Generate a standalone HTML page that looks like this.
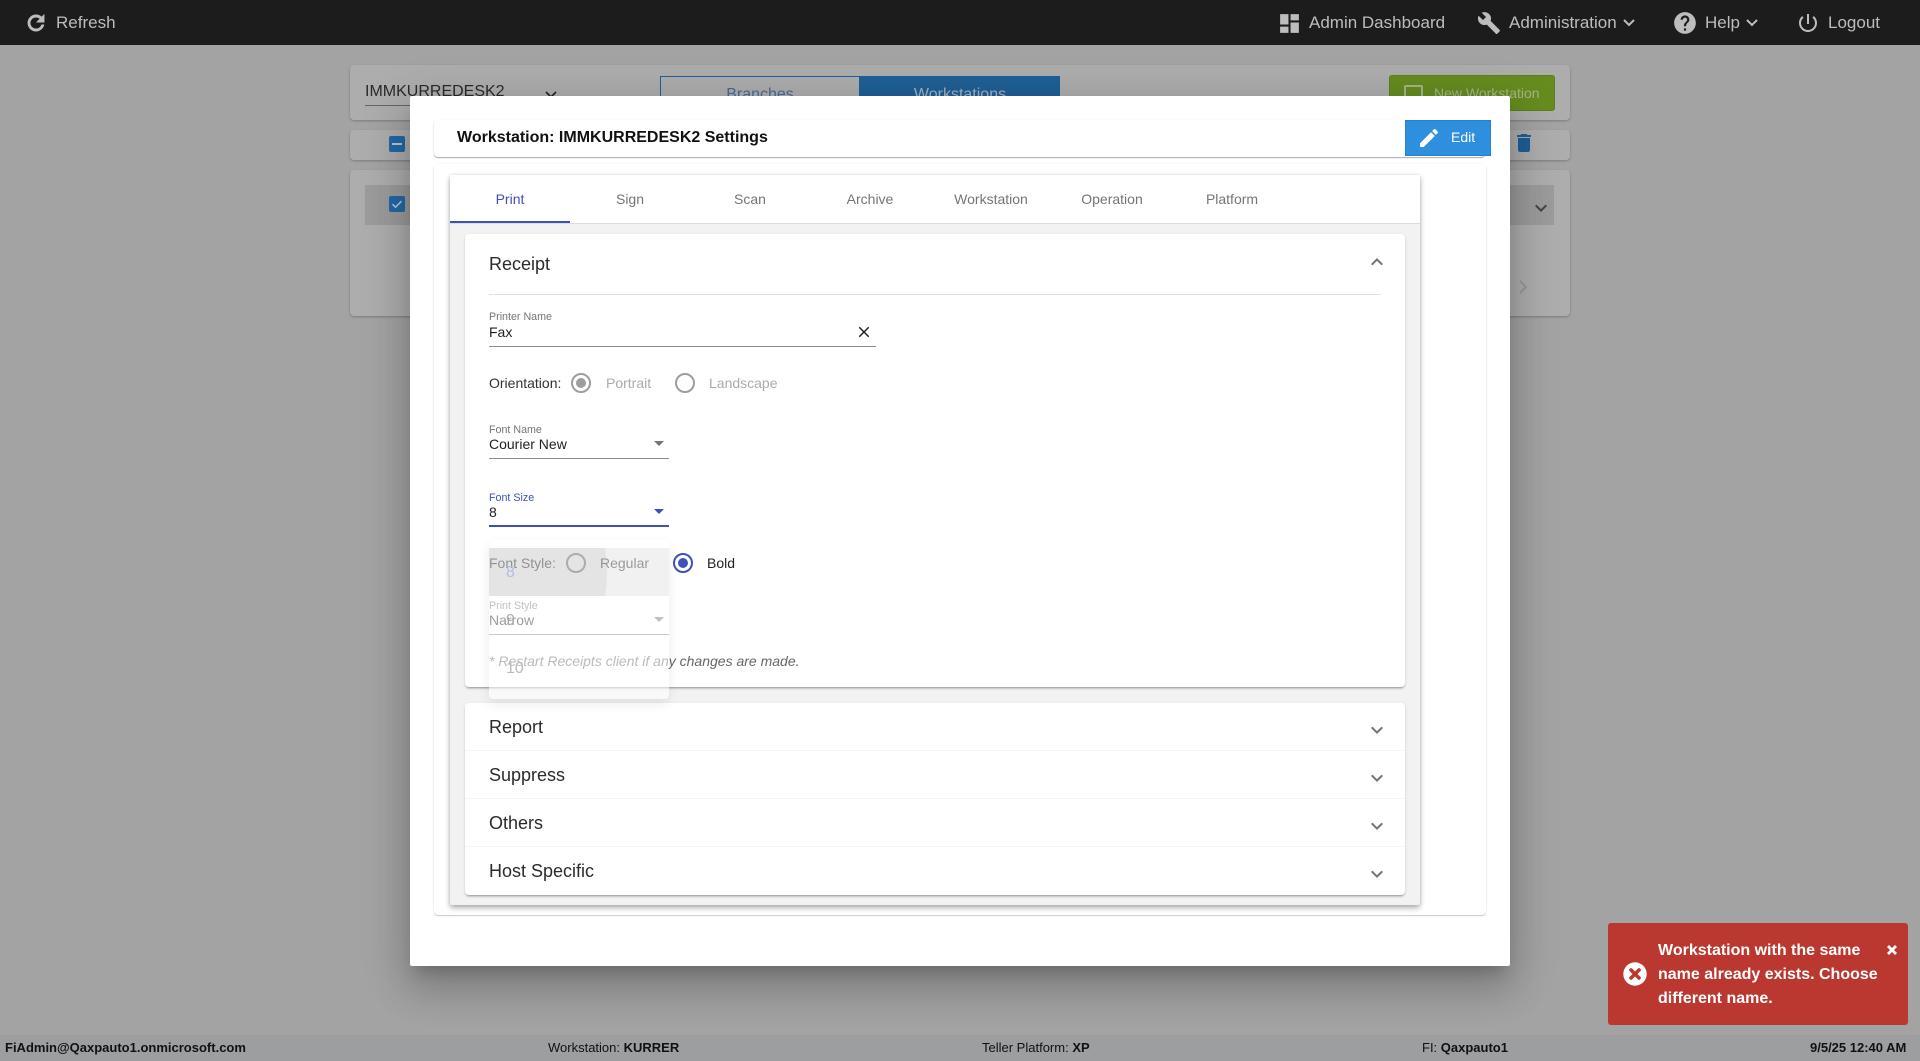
<!DOCTYPE html>
<html><head><meta charset="utf-8"><title>Workstation Settings</title>
<style>
*{box-sizing:border-box}
html,body{margin:0;padding:0;width:1920px;height:1061px;overflow:hidden;background:#a3a3a3;font-family:"Liberation Sans",Arial,sans-serif}
.a{position:absolute}
.t{position:absolute;white-space:nowrap}
svg{position:absolute;display:block}
.card{position:absolute;background:#adadad;border-radius:4px;box-shadow:0 1px 2px rgba(0,0,0,.25)}
.top{color:#bdbdbd;font-size:17px;line-height:24px;top:11px}
.lbl{font-size:10.7px;line-height:14px;color:#757575}
.val{font-size:14px;line-height:18px;color:#222}
.tab{font-size:14px;line-height:18px;top:190px;width:120px;text-align:center;color:#757575}
.row{font-size:18px;line-height:24px;left:489px;color:#2b2b2b}
.foot{font-size:13px;line-height:16px;top:1040px;color:#111}
.foot b{font-weight:700}
</style></head>
<body>
<!-- background page -->
<div class="card" style="left:350px;top:65px;width:1220px;height:55px"></div>
<div class="card" style="left:350px;top:130px;width:1220px;height:30px"></div>
<div class="card" style="left:350px;top:170px;width:1220px;height:146px"></div>
<div class="t" style="left:365px;top:82px;font-size:16px;line-height:20px;color:#2a2a2a">IMMKURREDESK2</div>
<div class="a" style="left:365px;top:105px;width:150px;height:1px;background:#666"></div>
<svg style="left:543px;top:86px" width="16" height="16" viewBox="0 0 16 16"><path d="M3 6l5 5 5-5" fill="none" stroke="#222" stroke-width="1.6"/></svg>
<div class="a" style="left:660px;top:76px;width:200px;height:40px;border:1px solid #20609a"></div>
<div class="a" style="left:860px;top:76px;width:200px;height:40px;background:#205f95"></div>
<div class="t" style="left:660px;width:200px;text-align:center;top:85px;font-size:16px;line-height:20px;color:#48699a">Branches</div>
<div class="t" style="left:860px;width:200px;text-align:center;top:85px;font-size:16px;line-height:20px;color:#a3b3c5">Workstations</div>
<div class="a" style="left:1389px;top:75px;width:166px;height:36px;background:#668c20;border-radius:3px;border:1px solid #5c7f1c"></div>
<div class="a" style="left:1404px;top:85px;width:19px;height:19px;border:2px solid #a6b58a;border-radius:2px"></div>
<div class="t" style="left:1434px;top:84px;font-size:14px;line-height:18px;color:#a6b58a">New Workstation</div>
<div class="a" style="left:389px;top:136px;width:16px;height:16px;background:#2468a4;border-radius:2px"></div>
<div class="a" style="left:392px;top:143px;width:10px;height:2px;background:#b5c5d5"></div>
<svg style="left:1512px;top:131px" width="24" height="24" viewBox="0 0 24 24"><path fill="#205f95" d="M6 19c0 1.1.9 2 2 2h8c1.1 0 2-.9 2-2V7H6v12zM19 4h-3.5l-1-1h-5l-1 1H5v2h14V4z"/></svg>
<div class="a" style="left:365px;top:185px;width:1189px;height:40px;background:#9b9b9b"></div>
<div class="a" style="left:389px;top:196px;width:16px;height:16px;background:#2468a4;border-radius:2px"></div>
<svg style="left:389px;top:196px" width="16" height="16" viewBox="0 0 16 16"><path d="M3.5 8.2l3 3 6-6" fill="none" stroke="#b5c5d5" stroke-width="1.5"/></svg>
<svg style="left:1529px;top:196px" width="24" height="24" viewBox="0 0 24 24"><path fill="#444" d="M16.59 8.59L12 13.17 7.41 8.59 6 10l6 6 6-6z"/></svg>
<svg style="left:1515px;top:279px" width="16" height="16" viewBox="0 0 16 16"><path d="M5 2l6 6-6 6" fill="none" stroke="#939393" stroke-width="1.6"/></svg>
<div class="a" style="left:0;top:1035px;width:1920px;height:26px;background:#9d9e9f"></div>
<div class="t foot" style="left:5px"><b>FiAdmin@Qaxpauto1.onmicrosoft.com</b></div>
<div class="t foot" style="left:548px">Workstation: <b>KURRER</b></div>
<div class="t foot" style="left:982px">Teller Platform: <b>XP</b></div>
<div class="t foot" style="left:1422px">FI: <b>Qaxpauto1</b></div>
<div class="t foot" style="left:1810px"><b>9/5/25 12:40 AM</b></div>
<!-- top bar -->
<div class="a" style="left:0;top:0;width:1920px;height:45px;background:#1c1c1c"></div>
<svg style="left:24px;top:11px" width="24" height="24" viewBox="0 0 24 24"><path fill="#bdbdbd" stroke="#bdbdbd" stroke-width=".9" d="M17.65 6.35C16.2 4.9 14.21 4 12 4c-4.42 0-7.99 3.58-7.99 8s3.57 8 7.99 8c3.73 0 6.84-2.55 7.73-6h-2.08c-.82 2.33-3.04 4-5.65 4-3.31 0-6-2.69-6-6s2.69-6 6-6c1.66 0 3.14.69 4.22 1.78L13 11h7V4l-2.35 2.35z"/></svg>
<div class="t top" style="left:56px">Refresh</div>
<svg style="left:1277px;top:11px" width="25" height="25" viewBox="0 0 24 24"><path fill="#bdbdbd" d="M3 13h8V3H3v10zm0 8h8v-6H3v6zm10 0h8V11h-8v10zm0-18v6h8V3h-8z"/></svg>
<div class="t top" style="left:1309px">Admin Dashboard</div>
<svg style="left:1477px;top:11px" width="24" height="24" viewBox="0 0 24 24"><path fill="#bdbdbd" d="M22.7 19l-9.1-9.1c.9-2.3.4-5-1.5-6.9-2-2-5-2.4-7.4-1.3L9 6 6 9 1.6 4.7C.4 7.1.9 10.1 2.9 12.1c1.9 1.9 4.6 2.4 6.9 1.5l9.1 9.1c.4.4 1 .4 1.4 0l2.3-2.3c.5-.4.5-1.1.1-1.4z"/></svg>
<div class="t top" style="left:1509px">Administration</div>
<svg style="left:1622px;top:17px" width="14" height="12" viewBox="0 0 14 12"><path d="M2 3l5 5 5-5" fill="none" stroke="#bdbdbd" stroke-width="2"/></svg>
<svg style="left:1672px;top:10px" width="26" height="26" viewBox="0 0 24 24"><path fill="#bdbdbd" d="M12 2C6.48 2 2 6.48 2 12s4.48 10 10 10 10-4.48 10-10S17.52 2 12 2zm1 17h-2v-2h2v2zm2.07-7.75l-.9.92C13.45 12.9 13 13.5 13 15h-2v-.5c0-1.1.45-2.1 1.17-2.83l1.24-1.26c.37-.36.59-.86.59-1.41 0-1.1-.9-2-2-2s-2 .9-2 2H8c0-2.21 1.79-4 4-4s4 1.79 4 4c0 .88-.36 1.68-.93 2.25z"/></svg>
<div class="t top" style="left:1705px">Help</div>
<svg style="left:1745px;top:17px" width="14" height="12" viewBox="0 0 14 12"><path d="M2 3l5 5 5-5" fill="none" stroke="#bdbdbd" stroke-width="2"/></svg>
<svg style="left:1796px;top:11px" width="24" height="24" viewBox="0 0 24 24"><path fill="#bdbdbd" d="M13 3h-2v10h2V3zm4.83 2.17l-1.42 1.42C17.99 7.86 19 9.81 19 12c0 3.87-3.13 7-7 7s-7-3.13-7-7c0-2.19 1.01-4.14 2.58-5.42L6.17 5.17C4.23 6.82 3 9.26 3 12c0 4.97 4.03 9 9 9s9-4.03 9-9c0-2.74-1.23-5.18-3.17-6.83z"/></svg>
<div class="t top" style="left:1828px">Logout</div>
<!-- modal -->
<div class="a" style="left:410px;top:96px;width:1100px;height:870px;background:#fff;border-radius:2px;box-shadow:0 11px 15px -7px rgba(0,0,0,.2),0 24px 38px 3px rgba(0,0,0,.14),0 9px 46px 8px rgba(0,0,0,.12)"></div>
<div class="a" style="left:434px;top:120px;width:1051px;height:37px;background:#fff;border-radius:4px;box-shadow:0 1px 1px rgba(0,0,0,.32),0 0 2px rgba(0,0,0,.05)"></div>
<div class="t" style="left:457px;top:128px;font-size:16px;line-height:20px;font-weight:700;color:#111">Workstation: IMMKURREDESK2 Settings</div>
<div class="a" style="left:1405px;top:120px;width:86px;height:36px;background:#2f8fdf;border:1px solid #2a7fc8"></div>
<svg style="left:1417px;top:126px" width="24" height="24" viewBox="0 0 24 24"><path fill="#fff" d="M3 17.25V21h3.75L17.81 9.94l-3.75-3.75L3 17.25zM20.71 7.04c.39-.39.39-1.02 0-1.41l-2.34-2.34c-.39-.39-1.02-.39-1.41 0l-1.83 1.83 3.75 3.75 1.83-1.83z"/></svg>
<div class="t" style="left:1451px;top:128px;font-size:14px;line-height:18px;color:#fff">Edit</div>
<div class="a" style="left:434px;top:164px;width:1052px;height:751px;background:#fff;border-radius:4px;box-shadow:0 1px 1px rgba(0,0,0,.2),0 0 2px rgba(0,0,0,.06)"></div>
<div class="a" style="left:450px;top:175px;width:970px;height:730px;background:#f2f2f2;border-radius:2px;box-shadow:0 3px 6px rgba(0,0,0,.3),0 0 3px rgba(0,0,0,.12)"></div>
<div class="a" style="left:450px;top:175px;width:970px;height:49px;background:#fff;border-bottom:1px solid #ddd"></div>
<div class="a" style="left:450px;top:221px;width:120px;height:2px;background:#3f51b5"></div>
<div class="t tab" style="left:450px;color:#3f51b5">Print</div>
<div class="t tab" style="left:570px">Sign</div>
<div class="t tab" style="left:690px">Scan</div>
<div class="t tab" style="left:810px">Archive</div>
<div class="t tab" style="left:931px">Workstation</div>
<div class="t tab" style="left:1052px">Operation</div>
<div class="t tab" style="left:1172px">Platform</div>
<!-- receipt panel -->
<div class="a" style="left:465px;top:234px;width:940px;height:453px;background:#fff;border-radius:4px;box-shadow:0 2px 2px -1px rgba(0,0,0,.35),0 1px 3px rgba(0,0,0,.1)"></div>
<div class="t row" style="top:252px">Receipt</div>
<svg style="left:1365px;top:250px" width="24" height="24" viewBox="0 0 24 24"><path fill="#757575" d="M12 8l-6 6 1.41 1.41L12 10.83l4.59 4.58L18 14z"/></svg>
<div class="a" style="left:489px;top:294px;width:892px;height:1px;background:#e0e0e0"></div>
<div class="t lbl" style="left:489px;top:310px">Printer Name</div>
<div class="t val" style="left:489px;top:323px">Fax</div>
<svg style="left:855px;top:323px" width="18" height="18" viewBox="0 0 24 24"><path fill="#222" d="M19 6.41L17.59 5 12 10.59 6.41 5 5 6.41 10.59 12 5 17.59 6.41 19 12 13.41 17.59 19 19 17.59 13.41 12z"/></svg>
<div class="a" style="left:489px;top:346px;width:387px;height:1px;background:#8a8a8a"></div>
<div class="t val" style="left:489px;top:374px;color:#333">Orientation:</div>
<div class="a" style="left:571px;top:373px;width:20px;height:20px;border:2px solid #9e9e9e;border-radius:50%"></div>
<div class="a" style="left:576px;top:378px;width:10px;height:10px;background:#9e9e9e;border-radius:50%"></div>
<div class="t val" style="left:606px;top:374px;color:#aaa">Portrait</div>
<div class="a" style="left:675px;top:373px;width:20px;height:20px;border:2px solid #9e9e9e;border-radius:50%"></div>
<div class="t val" style="left:709px;top:374px;color:#aaa">Landscape</div>
<div class="t lbl" style="left:489px;top:422.5px">Font Name</div>
<div class="t val" style="left:489px;top:435px">Courier New</div>
<div class="a" style="left:654px;top:441px;width:0;height:0;border-left:5px solid transparent;border-right:5px solid transparent;border-top:5px solid #757575"></div>
<div class="a" style="left:489px;top:458px;width:180px;height:1px;background:#8a8a8a"></div>
<div class="t lbl" style="left:489px;top:490.5px;color:#3f51b5">Font Size</div>
<div class="t val" style="left:489px;top:503px">8</div>
<div class="a" style="left:654px;top:509px;width:0;height:0;border-left:5px solid transparent;border-right:5px solid transparent;border-top:5px solid #3f51b5"></div>
<div class="a" style="left:489px;top:525px;width:180px;height:2px;background:#3f51b5"></div>
<div class="t val" style="left:489px;top:554px;color:#333">Font Style:</div>
<div class="a" style="left:566px;top:553px;width:20px;height:20px;border:2px solid #757575;border-radius:50%"></div>
<div class="t val" style="left:600px;top:554px;color:#333">Regular</div>
<div class="a" style="left:673px;top:553px;width:20px;height:20px;border:2px solid #3f51b5;border-radius:50%"></div>
<div class="a" style="left:678px;top:558px;width:10px;height:10px;background:#3f51b5;border-radius:50%"></div>
<div class="t val" style="left:707px;top:554px;color:#222">Bold</div>
<div class="t lbl" style="left:489px;top:598.5px">Print Style</div>
<div class="t val" style="left:489px;top:611px">Narrow</div>
<div class="a" style="left:654px;top:617px;width:0;height:0;border-left:5px solid transparent;border-right:5px solid transparent;border-top:5px solid #757575"></div>
<div class="a" style="left:489px;top:634px;width:180px;height:1px;background:#8a8a8a"></div>
<div class="t" style="left:489px;top:652px;font-size:14px;line-height:18px;font-style:italic;color:#666">* Restart Receipts client if any changes are made.</div>
<!-- other panels -->
<div class="a" style="left:465px;top:703px;width:940px;height:192px;background:#fff;border-radius:4px;box-shadow:0 2px 2px -1px rgba(0,0,0,.35),0 1px 3px rgba(0,0,0,.1)"></div>
<div class="a" style="left:465px;top:750px;width:940px;height:1px;background:#f5f5f5"></div>
<div class="a" style="left:465px;top:798px;width:940px;height:1px;background:#f5f5f5"></div>
<div class="a" style="left:465px;top:846px;width:940px;height:1px;background:#f5f5f5"></div>
<div class="t row" style="top:715px">Report</div>
<div class="t row" style="top:763px">Suppress</div>
<div class="t row" style="top:811px">Others</div>
<div class="t row" style="top:859px">Host Specific</div>
<svg style="left:1365px;top:718px" width="24" height="24" viewBox="0 0 24 24"><path fill="#757575" d="M16.59 8.59L12 13.17 7.41 8.59 6 10l6 6 6-6z"/></svg>
<svg style="left:1365px;top:766px" width="24" height="24" viewBox="0 0 24 24"><path fill="#757575" d="M16.59 8.59L12 13.17 7.41 8.59 6 10l6 6 6-6z"/></svg>
<svg style="left:1365px;top:814px" width="24" height="24" viewBox="0 0 24 24"><path fill="#757575" d="M16.59 8.59L12 13.17 7.41 8.59 6 10l6 6 6-6z"/></svg>
<svg style="left:1365px;top:862px" width="24" height="24" viewBox="0 0 24 24"><path fill="#757575" d="M16.59 8.59L12 13.17 7.41 8.59 6 10l6 6 6-6z"/></svg>
<!-- fading dropdown menu -->
<div class="a" style="left:489px;top:540px;width:180px;height:159px;background:rgba(255,255,255,.55);border-radius:4px;box-shadow:0 5px 12px rgba(0,0,0,.08);overflow:hidden">
  <div class="a" style="left:0;top:8px;width:180px;height:48px;background:rgba(0,0,0,.055);overflow:hidden">
    <div class="a" style="left:-170px;top:-120px;width:288px;height:288px;background:rgba(0,0,0,.05);border-radius:50%"></div>
  </div>
</div>
<div class="t" style="left:506px;top:564px;font-size:16px;line-height:18px;color:#b3bde3">8</div>
<div class="t" style="left:506px;top:612px;font-size:16px;line-height:18px;color:#aaa">9</div>
<div class="t" style="left:506px;top:660px;font-size:16px;line-height:18px;color:#bbb">10</div>
<!-- toast -->
<div class="a" style="left:1608px;top:923px;width:300px;height:102px;background:#bb3831;border-radius:3px"></div>
<svg style="left:1623px;top:962px" width="24" height="24" viewBox="0 0 24 24"><circle cx="12" cy="12" r="11.7" fill="#fff"/><path d="M8 8l8 8M16 8l-8 8" stroke="#bb3831" stroke-width="3.6" stroke-linecap="round"/></svg>
<div class="t" style="left:1658px;top:939px;font-size:16px;line-height:24px;font-weight:700;color:#fff">Workstation with the same<br>name already exists. Choose<br>different name.</div>
<svg style="left:1885px;top:943px" width="14" height="14" viewBox="0 0 14 14"><path d="M3 3l8 8M11 3l-8 8" stroke="#fff" stroke-width="2.8"/></svg>
</body></html>
